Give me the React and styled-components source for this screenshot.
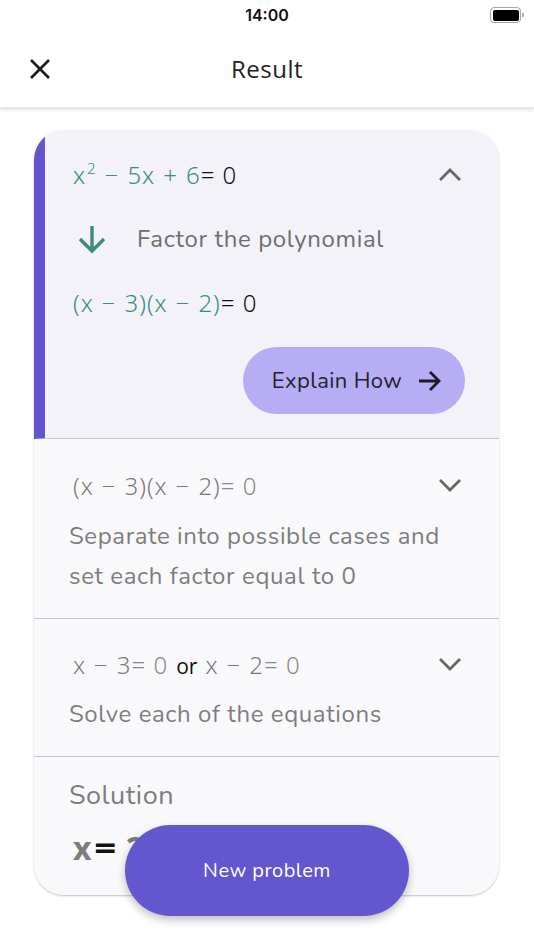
import React from "react";
import styled, { createGlobalStyle } from "styled-components";

const GlobalStyle = createGlobalStyle`
  html, body {
    margin: 0;
    padding: 0;
    background: #ffffff;
  }
  body {
    font-family: "Nunito", "Open Sans", "Noto Sans", sans-serif;
    -webkit-font-smoothing: antialiased;
  }
`;

const Screen = styled.div`
  position: relative;
  width: 534px;
  height: 950px;
  overflow: hidden;
  background: #ffffff;
`;

const StatusBar = styled.div`
  height: 30px;
  display: flex;
  align-items: center;
  justify-content: center;
  position: relative;
  font-family: Inter, "Liberation Sans", sans-serif;
  font-weight: 600;
  font-size: 16px;
  color: #111;
`;

const Battery = styled.div`
  position: absolute;
  right: 10px;
  top: 7px;
  display: flex;
  align-items: center;
  gap: 1px;
`;

const BatteryBody = styled.div`
  width: 26px;
  height: 11px;
  border: 1.5px solid #a8a8a8;
  border-radius: 4px;
  padding: 1.5px;
  box-sizing: content-box;
  span {
    display: block;
    width: 100%;
    height: 100%;
    background: #000;
    border-radius: 2px;
  }
`;

const BatteryTip = styled.div`
  width: 2px;
  height: 4px;
  background: #a8a8a8;
  border-radius: 0 1px 1px 0;
`;

const NavBar = styled.header`
  height: 78px;
  display: grid;
  grid-template-columns: 80px 1fr 80px;
  align-items: center;
  box-shadow: 0 2px 3px rgba(0, 0, 0, 0.12);
  border-bottom: 1px solid #e6e6e6;
  box-sizing: border-box;
  position: relative;
  z-index: 1;
`;

const CloseButton = styled.div`
  padding-left: 29px;
  display: flex;
  align-items: center;
`;

const Title = styled.h1`
  margin: 0;
  text-align: center;
  font-family: "Open Sans", "Liberation Sans", sans-serif;
  font-weight: 400;
  font-size: 24px;
  letter-spacing: 0.5px;
  color: #222;
`;

const Content = styled.main`
  padding: 22px 35px 0 34px;
`;

const Card = styled.section`
  border-radius: 30px;
  overflow: hidden;
  background: #f9f9fb;
  box-shadow: 0 1px 2px rgba(0, 0, 0, 0.25);
`;

const Step = styled.div`
  background: ${(p) => (p.$active ? "#f3f2f9" : "#f9f9fb")};
  border-left: ${(p) => (p.$active ? "11px solid #6256cf" : "none")};
  border-bottom: ${(p) => (p.$last ? "none" : "1px solid #c6c6ca")};
  padding: ${(p) => p.$pad};
  display: flex;
  flex-direction: column;
`;

const HeaderRow = styled.div`
  height: ${(p) => p.$h || 44}px;
  margin-top: ${(p) => p.$mt || 0}px;
  display: flex;
  align-items: center;
  justify-content: space-between;
  padding-left: ${(p) => p.$indent || 0}px;
  padding-right: 38px;
`;

const Math = styled.span`
  font-family: "Noto Sans", "DejaVu Sans", sans-serif;
  font-weight: 300;
  font-size: 24px;
  letter-spacing: 1px;
  color: ${(p) => (p.$muted ? "#7a7a7a" : "#3c8c7e")};
  white-space: pre;
  display: inline-flex;
  align-items: baseline;
  sup {
    font-size: 15px;
    position: relative;
    top: -10px;
    margin-left: 1px;
  }
`;

const Op = styled.span`
  margin: 0 ${(p) => p.$m ?? 8}px;
`;

const Eq = styled.span`
  color: ${(p) => (p.$muted ? "#8a8a8a" : "#111")};
`;

const Or = styled.span`
  font-family: "Open Sans", sans-serif;
  font-weight: 400;
  letter-spacing: 0;
  color: #111;
  font-size: 21px;
  margin: 0 8px;
`;

const FactorRow = styled.div`
  height: 48px;
  margin-top: 17px;
  display: flex;
  align-items: center;
  gap: 30px;
  padding-left: 4px;
`;

const StepLabel = styled.span`
  font-size: 24px;
  letter-spacing: 0.65px;
  color: #6e6e6e;
`;

const Description = styled.p`
  margin: ${(p) => p.$mt || 0}px 0 0;
  font-size: 24px;
  letter-spacing: 0.6px;
  line-height: 40px;
  color: #7d7d7d;
`;

const ButtonRow = styled.div`
  display: flex;
  justify-content: flex-end;
  margin-top: 21px;
  padding-right: 34px;
`;

const ExplainButton = styled.button`
  height: 67px;
  width: 222px;
  border: none;
  border-radius: 34px;
  background: #b6adf5;
  display: flex;
  align-items: center;
  justify-content: center;
  gap: 16px;
  font-family: inherit;
  font-size: 22px;
  letter-spacing: 0.4px;
  color: #23222e;
  padding: 0 0 0 6px;
`;

const SolutionLabel = styled.div`
  font-size: 27px;
  letter-spacing: 0.5px;
  line-height: 40px;
  color: #7d7d7d;
`;

const SolutionValue = styled.div`
  margin-top: 9px;
  height: 44px;
  display: flex;
  align-items: center;
  padding-left: 4px;
  font-family: "Noto Sans", "DejaVu Sans", sans-serif;
  font-weight: 700;
  font-size: 32px;
  color: #7d7d7d;
  span {
    color: #111;
    margin: 0 12px 0 4px;
    transform: scaleX(1.2);
  }
`;

const NewProblem = styled.button`
  position: absolute;
  left: 125px;
  top: 825px;
  width: 284px;
  height: 91px;
  border: none;
  border-radius: 46px;
  background: #6356cf;
  color: #ffffff;
  font-family: inherit;
  font-size: 20px;
  letter-spacing: 0.5px;
  box-shadow: 0 4px 8px rgba(0, 0, 0, 0.25);
`;

const Chevron = ({ up }) => (
  <svg width="22" height="14" viewBox="0 0 22 14">
    <path
      d={up ? "M2 12 L11 3 L20 12" : "M2 3 L11 12 L20 3"}
      fill="none"
      stroke="#666"
      strokeWidth="2.8"
      strokeLinecap="square"
    />
  </svg>
);

export default function App() {
  return (
    <>
      <GlobalStyle />
      <Screen>
        <StatusBar>
          14:00
          <Battery>
            <BatteryBody>
              <span />
            </BatteryBody>
            <BatteryTip />
          </Battery>
        </StatusBar>
        <NavBar>
          <CloseButton>
            <svg width="22" height="22" viewBox="0 0 22 22">
              <path d="M2 2 L20 20 M20 2 L2 20" stroke="#1a1a1a" strokeWidth="2.6" />
            </svg>
          </CloseButton>
          <Title>Result</Title>
          <div />
        </NavBar>

        <Content>
          <Card>
            <Step $active $pad="20px 0 24px 28px">
              <HeaderRow $h={48}>
                <Math>
                  x<sup>2</sup>
                  <Op>−</Op>5x<Op>+</Op>6<Eq>= 0</Eq>
                </Math>
                <Chevron up />
              </HeaderRow>
              <FactorRow>
                <svg width="30" height="30" viewBox="0 0 30 30">
                  <path
                    d="M15 2 V27 M3 15 L15 27 L27 15"
                    fill="none"
                    stroke="#3c8c7e"
                    strokeWidth="3.4"
                  />
                </svg>
                <StepLabel>Factor the polynomial</StepLabel>
              </FactorRow>
              <HeaderRow $h={48} $mt={15}>
                <Math>
                  (x<Op>−</Op>3)(x<Op>−</Op>2)<Eq>= 0</Eq>
                </Math>
              </HeaderRow>
              <ButtonRow>
                <ExplainButton>
                  Explain How
                  <svg width="24" height="22" viewBox="0 0 24 22">
                    <path
                      d="M1 11 H21 M12 2 L21 11 L12 20"
                      fill="none"
                      stroke="#1d1c26"
                      strokeWidth="2.8"
                    />
                  </svg>
                </ExplainButton>
              </ButtonRow>
            </Step>

            <Step $pad="24px 0 22px 35px">
              <HeaderRow $indent={4}>
                <Math $muted>
                  (x<Op>−</Op>3)(x<Op>−</Op>2)<Eq $muted>= 0</Eq>
                </Math>
                <Chevron />
              </HeaderRow>
              <Description $mt={9}>
                Separate into possible cases and
                <br />
                set each factor equal to 0
              </Description>
            </Step>

            <Step $pad="23px 0 22px 35px">
              <HeaderRow $indent={4}>
                <Math $muted>
                  x<Op>−</Op>3<Eq $muted>= 0</Eq>
                  <Or>or</Or>x<Op>−</Op>2<Eq $muted>= 0</Eq>
                </Math>
                <Chevron />
              </HeaderRow>
              <Description $mt={8}>Solve each of the equations</Description>
            </Step>

            <Step $last $pad="19px 0 26px 35px">
              <SolutionLabel>Solution</SolutionLabel>
              <SolutionValue>
                x<span>=</span>2
              </SolutionValue>
            </Step>
          </Card>
        </Content>

        <NewProblem>New problem</NewProblem>
      </Screen>
    </>
  );
}
